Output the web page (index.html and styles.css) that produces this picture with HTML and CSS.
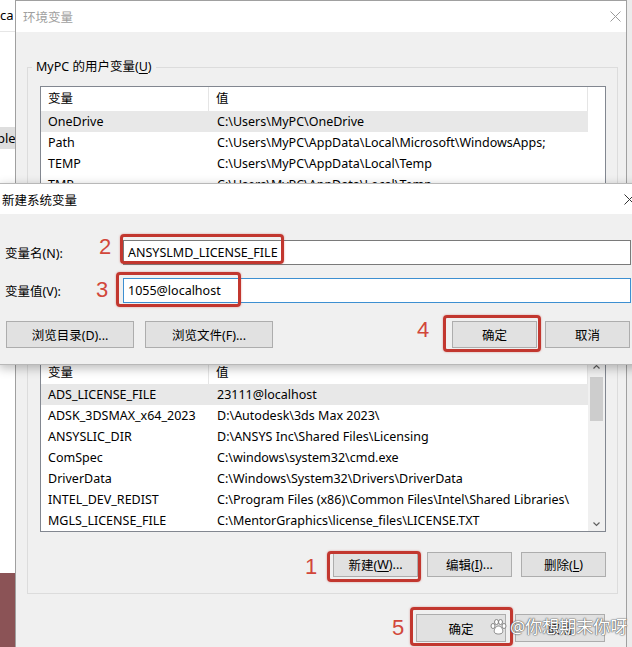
FILE: index.html
```html
<!DOCTYPE html>
<html lang="zh-CN">
<head>
<meta charset="utf-8">
<title>环境变量</title>
<link rel="stylesheet" href="styles.css">
</head>
<body>
<div class="desktop">
  <div class="bg-window">
    <div class="bg-tab">ca</div>
    <div class="bg-item">ple</div>
    <div class="bg-fill"></div>
    <div class="bg-maroon"></div>
  </div>

  <div class="win env">
    <div class="titlebar">
      <span class="title">环境变量</span>
      <svg class="close close-inactive" width="11" height="11" viewBox="0 0 11 11"><path d="M0.5 0.5 L10.5 10.5 M10.5 0.5 L0.5 10.5" stroke="currentColor" stroke-width="1" fill="none"/></svg>
    </div>
    <div class="win-body">
      <div class="group">
        <div class="legend">MyPC 的用户变量(<u>U</u>)</div>
        <div class="listview">
          <div class="lv-main">
            <div class="lv-head"><span class="cell">变量</span><span class="cell">值</span></div>
            <div class="lv-rows">
              <div class="lv-row selected"><span class="cell">OneDrive</span><span class="cell">C:\Users\MyPC\OneDrive</span></div>
              <div class="lv-row"><span class="cell">Path</span><span class="cell">C:\Users\MyPC\AppData\Local\Microsoft\WindowsApps;</span></div>
              <div class="lv-row"><span class="cell">TEMP</span><span class="cell">C:\Users\MyPC\AppData\Local\Temp</span></div>
              <div class="lv-row"><span class="cell">TMP</span><span class="cell">C:\Users\MyPC\AppData\Local\Temp</span></div>
            </div>
          </div>
          <div class="lv-side"></div>
        </div>
        <div class="btn-row">
          <span class="btn">新建(<u>N</u>)...</span>
          <span class="btn">编辑(<u>E</u>)...</span>
          <span class="btn">删除(<u>D</u>)</span>
        </div>
      </div>

      <div class="group group-sys">
        <div class="legend">系统变量(<u>S</u>)</div>
        <div class="listview">
          <div class="lv-main">
            <div class="lv-head lv-head-sys"><span class="cell">变量</span><span class="cell">值</span></div>
            <div class="lv-rows">
              <div class="lv-row selected"><span class="cell">ADS_LICENSE_FILE</span><span class="cell">23111@localhost</span></div>
              <div class="lv-row"><span class="cell">ADSK_3DSMAX_x64_2023</span><span class="cell">D:\Autodesk\3ds Max 2023\</span></div>
              <div class="lv-row"><span class="cell">ANSYSLIC_DIR</span><span class="cell">D:\ANSYS Inc\Shared Files\Licensing</span></div>
              <div class="lv-row"><span class="cell">ComSpec</span><span class="cell">C:\windows\system32\cmd.exe</span></div>
              <div class="lv-row"><span class="cell">DriverData</span><span class="cell">C:\Windows\System32\Drivers\DriverData</span></div>
              <div class="lv-row"><span class="cell">INTEL_DEV_REDIST</span><span class="cell">C:\Program Files (x86)\Common Files\Intel\Shared Libraries\</span></div>
              <div class="lv-row"><span class="cell">MGLS_LICENSE_FILE</span><span class="cell">C:\MentorGraphics\license_files\LICENSE.TXT</span></div>
            </div>
          </div>
          <div class="lv-side scrollbar">
            <svg class="sb-arrow" width="17" height="14" viewBox="0 0 17 14"><path d="M5.5 8.5 L8.5 5.5 L11.5 8.5" stroke="#606060" stroke-width="1.2" fill="none"/></svg>
            <div class="sb-track"><div class="sb-thumb"></div></div>
            <svg class="sb-arrow" width="17" height="14" viewBox="0 0 17 14"><path d="M5.5 5.5 L8.5 8.5 L11.5 5.5" stroke="#606060" stroke-width="1.2" fill="none"/></svg>
          </div>
        </div>
        <div class="btn-row btn-row-sys">
          <span class="btn">新建(<u>W</u>)...</span>
          <span class="btn">编辑(<u>I</u>)...</span>
          <span class="btn">删除(<u>L</u>)</span>
        </div>
      </div>

      <div class="btn-row footer">
        <span class="btn btn-footer">确定</span>
        <span class="btn btn-footer">取消</span>
      </div>
    </div>
  </div>

  <div class="win dialog">
    <div class="titlebar dlg-titlebar">
      <span class="title dlg-title">新建系统变量</span>
      <svg class="close" width="11" height="11" viewBox="0 0 11 11"><path d="M0.5 0.5 L10.5 10.5 M10.5 0.5 L0.5 10.5" stroke="currentColor" stroke-width="1" fill="none"/></svg>
    </div>
    <div class="dlg-body">
      <div class="form">
        <span class="label">变量名(N):</span>
        <span class="input">ANSYSLMD_LICENSE_FILE</span>
        <span class="label">变量值(V):</span>
        <span class="input focused">1055@localhost</span>
      </div>
      <div class="dlg-buttons">
        <span class="btn btn-wide">浏览目录(D)...</span>
        <span class="btn btn-wide">浏览文件(F)...</span>
        <span class="btn btn-dlg btn-ok">确定</span>
        <span class="btn btn-dlg">取消</span>
      </div>
    </div>
  </div>

  <div class="mark mark-1"></div>
  <div class="mark mark-2"></div>
  <div class="mark mark-3"></div>
  <div class="mark mark-4"></div>
  <div class="mark mark-5"></div>
  <span class="num num-1">1</span>
  <span class="num num-2">2</span>
  <span class="num num-3">3</span>
  <span class="num num-4">4</span>
  <span class="num num-5">5</span>

  <div class="watermark">
    <svg width="17" height="16" viewBox="0 0 17 16"><g fill="#ffffff" stroke="#7a7a7a" stroke-width="0.9"><ellipse cx="3" cy="7" rx="2" ry="2.5"/><ellipse cx="6.5" cy="3" rx="2" ry="2.5"/><ellipse cx="10.5" cy="3" rx="2" ry="2.5"/><ellipse cx="14" cy="7" rx="2" ry="2.5"/><path d="M8.5 7 C5.5 7 3.5 11 4.5 13.5 C5.5 15.5 11.5 15.5 12.5 13.5 C13.5 11 11.5 7 8.5 7 Z"/></g></svg>
    <span class="wm-text">@你想期末你呀</span>
  </div>
</div>
</body>
</html>
```

FILE: styles.css
```css
* { box-sizing: border-box; }

body {
  margin: 0;
  font-family: "Noto Sans", "Noto Sans CJK SC", sans-serif;
  font-size: 12.5px;
  color: #000;
}

u { text-decoration: underline; text-underline-offset: 2px; }

.desktop {
  position: relative;
  width: 632px;
  height: 647px;
  overflow: hidden;
  background: #ececec;
}

/* background window on the left */
.bg-window {
  position: absolute;
  left: 0;
  top: 0;
  width: 16px;
  height: 647px;
  display: flex;
  flex-direction: column;
  background: #fff;
}
.bg-tab {
  height: 32px;
  padding-top: 5px;
  font-size: 13px;
  line-height: 20px;
  white-space: nowrap;
  border-bottom: 1px solid #e6e6e6;
}
.bg-item {
  margin-top: 95px;
  height: 22px;
  background: #dedede;
  font-size: 13px;
  line-height: 22px;
  text-indent: -3px;
  white-space: nowrap;
  overflow: hidden;
}
.bg-fill { flex: 1; }
.bg-maroon { height: 74px; background: #8b5356; }

/* windows */
.win {
  position: absolute;
  background: #f0f0f0;
  border: 1px solid #a0a0a0;
}
.env {
  left: 15px;
  top: 0;
  width: 612px;
  height: 700px;
}

.titlebar {
  height: 31px;
  background: #fff;
  display: flex;
  align-items: center;
  padding: 0 5px 0 7px;
}
.title {
  flex: 1;
  font-size: 12.5px;
  color: #a0a0a0;
}
.close { display: block; color: #9a9a9a; }

.win-body {
  padding: 35px 8px 0 11px;
}

.group {
  border: 1px solid #dcdcdc;
  padding: 0 11px 12px 12px;
}
.group-sys { margin-top: 29px; padding-bottom: 16px; }

.legend {
  width: fit-content;
  height: 14px;
  line-height: 14px;
  margin: -8px 0 0 -8px;
  padding: 0 4px;
  background: #f0f0f0;
  white-space: nowrap;
}

.listview {
  margin-top: 12px;
  border: 1px solid #828790;
  background: #fff;
  display: flex;
}
.lv-main { flex: 1; min-width: 0; }
.lv-side { width: 17px; }

.lv-head, .lv-row {
  display: grid;
  grid-template-columns: 168px 1fr;
  white-space: nowrap;
}
.lv-head { height: 24px; align-items: center; }
.lv-head .cell {
  height: 24px;
  line-height: 24px;
  border-right: 1px solid #e5e5e5;
}
.lv-head-sys .cell { line-height: 26px; }
.cell { padding-left: 7px; overflow: hidden; }

.lv-rows { height: 147px; }
.lv-row { height: 21px; line-height: 21px; }
.lv-row .cell:last-child { padding-left: 8px; }
.lv-row.selected { background: #e8e8e8; }

.scrollbar {
  background: #f0f0f0;
  display: flex;
  flex-direction: column;
}
.sb-arrow { display: block; flex: none; }
.sb-track { flex: 1; padding: 3px 2px 0 2px; }
.sb-thumb { height: 44px; background: #cdcdcd; }

/* buttons */
.btn-row {
  display: flex;
  justify-content: flex-end;
  gap: 10px;
  margin-top: 14px;
}
.btn-row-sys { margin-top: 20px; gap: 9px; }
.btn {
  width: 85px;
  height: 25px;
  display: flex;
  align-items: center;
  justify-content: center;
  border: 1px solid #adadad;
  background: #e1e1e1;
  white-space: nowrap;
}
.footer { margin: 20px 13px 0 0; gap: 9px; }
.btn-footer { width: 90px; height: 28px; }

/* new variable dialog */
.dialog {
  left: -1px;
  top: 183px;
  width: 643px;
  border-color: #b8b8b8;
  box-shadow: 0 3px 10px rgba(0, 0, 0, 0.28);
}
.dlg-titlebar { height: 30px; padding: 0 6px 0 2px; }
.dlg-title { color: #000; }
.dialog .close { color: #333; }

.dlg-body { padding: 26px 10px 16px 5px; }
.form {
  display: grid;
  grid-template-columns: 118px 1fr;
  row-gap: 13px;
  align-items: center;
}
.label { white-space: nowrap; }
.input {
  height: 25px;
  line-height: 23px;
  border: 1px solid #7a7a7a;
  background: #fff;
  padding-left: 4px;
  white-space: nowrap;
}
.input.focused { border-color: #3d8fd1; }

.dlg-buttons {
  display: flex;
  gap: 11px;
  margin: 18px 1px 0 1px;
}
.btn-wide { width: 128px; height: 27px; }
.btn-dlg { width: 85px; height: 27px; }
.btn-ok { margin-left: auto; }
.btn-ok + .btn-dlg { margin-left: -3px; }

/* annotations */
.mark {
  position: absolute;
  border: 3px solid #c2372f;
  border-radius: 4px;
  box-shadow: 0 0 2px rgba(194, 55, 47, 0.5);
}
.mark-1 { left: 327px; top: 551px; width: 94px; height: 31px; }
.mark-2 { left: 120px; top: 234px; width: 164px; height: 30px; }
.mark-3 { left: 116px; top: 272px; width: 125px; height: 35px; }
.mark-4 { left: 443px; top: 315px; width: 98px; height: 37px; }
.mark-5 { left: 410px; top: 607px; width: 103px; height: 39px; }

.num {
  position: absolute;
  font-family: "Liberation Sans", sans-serif;
  font-size: 22px;
  line-height: 22px;
  color: #d2473a;
}
.num-1 { left: 305px; top: 556px; }
.num-2 { left: 99px; top: 236px; }
.num-3 { left: 96px; top: 279px; }
.num-4 { left: 417px; top: 319px; }
.num-5 { left: 392px; top: 617px; }

.watermark {
  position: absolute;
  left: 490px;
  top: 616px;
  display: flex;
  align-items: center;
  gap: 3px;
}
.watermark svg { display: block; }
.wm-text {
  font-size: 17px;
  line-height: 22px;
  color: #ffffff;
  text-shadow: 0 0 1px #555, 0 0 1px #555, 0 0 2px #777;
  white-space: nowrap;
}
```
